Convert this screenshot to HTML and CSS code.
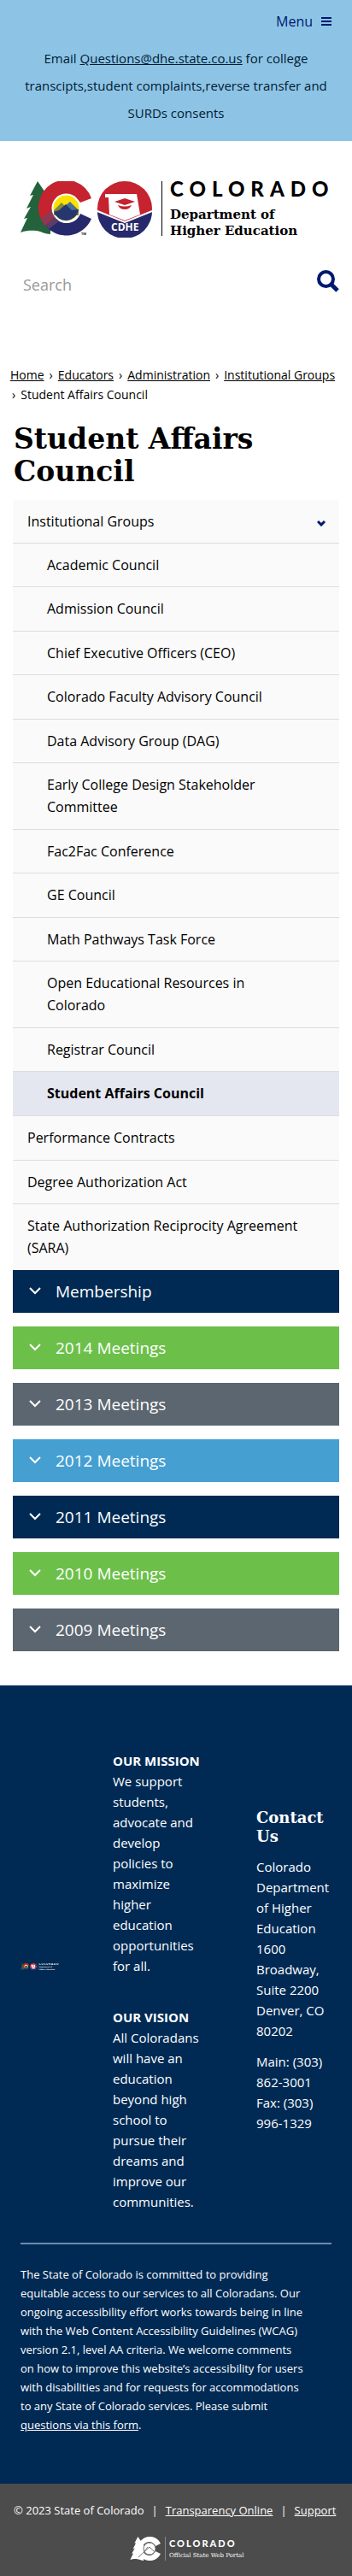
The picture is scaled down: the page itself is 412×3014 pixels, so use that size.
FILE: index.html
```html
<!DOCTYPE html>
<html lang="en">
<head>
<meta charset="utf-8">
<meta name="viewport" content="width=device-width, initial-scale=1">
<title>Student Affairs Council</title>
<link rel="stylesheet" href="styles.css">
</head>
<body>
<svg class="defs" aria-hidden="true">
  <symbol id="tree" viewBox="0 0 36 62">
    <path d="M20 0 11 17l4-1-8 16 5-2-8 14 4-1L0 60c9-3 14-2 19-2 6 1 10 4 16 4V22z"/>
  </symbol>
  <symbol id="agency-logo" viewBox="0 0 364 66">
    <path fill="#23633c" d="M20 0 11 17l4-1-8 16 5-2-8 14 4-1L0 60c9-3 14-2 19-2 6 1 10 4 16 4V22z"/>
    <path fill="#c4232f" d="M83 20A32 32 0 1 0 29 52L41 43A17 17 0 1 1 70 25z"/>
    <path fill="#26296b" d="M83 44A32 32 0 0 1 29 52L41 43A17 17 0 0 0 70 38z"/>
    <path fill="#5a3d69" d="M29 52l12-12 4 7-12 9z"/>
    <path fill="#8a3a58" d="M24 45l13-12 3 7-12 11z"/>
    <circle cx="53.500" cy="31.500" r="17" fill="#fff"/>
    <circle cx="53.500" cy="31.500" r="15" fill="#fde100"/>
    <path fill="#7d8b3c" d="M39 34l9-9 5 5 5-5 10 9v6H39z"/>
    <path fill="#466f97" d="m47 33 11-9 10 10-3 6-9-6z"/>
    <path fill="#26376f" d="m39 36 6-2 8-7 7 7 8-1a15 15 0 0 1-29 3z"/>
    <text x="71" y="63" class="tm" fill="#222">TM</text>
    <circle cx="122" cy="32" r="32" fill="#c4232f"/>
    <path fill="#26296b" d="M90 35l32 13 32-13a32 32 0 0 1-64 0z"/>
    <path fill="none" stroke="#fff" stroke-width="2" d="m90 35 32 13 32-13"/>
    <path fill="#fff" d="M99 15h37l4 24-18 7-18-7-1-20h-4z"/>
    <path fill="#c4232f" d="m110 24 12-4 12 4-12 4zM114 28q8 3 16 0-2 5-8 5t-8-5z"/>
    <text x="106" y="58" class="cdhe" fill="#fff">CDHE</text>
    <path stroke="currentColor" d="M165.500 0v64"/>
    <text x="175" y="18" class="wordmark" fill="currentColor">COLORADO</text>
    <text x="175" y="44" class="agency" fill="currentColor">Department of</text>
    <text x="175" y="63" class="agency" fill="currentColor">Higher Education</text>
  </symbol>
</svg>

<header>
  <div class="topbar">
    <button class="menu" type="button">Menu
      <svg width="12" height="12" viewBox="0 0 12 12" aria-hidden="true"><path d="M0 2h12M0 6h12M0 10h12" stroke="currentColor" stroke-width="2"/></svg>
    </button>
    <p class="notice">Email <a href="mailto:Questions@dhe.state.co.us">Questions@dhe.state.co.us</a> for college transcipts,student complaints,reverse transfer and SURDs consents</p>
  </div>
  <a class="logo" href="#" aria-label="Colorado Department of Higher Education"><svg viewBox="0 0 364 66" aria-hidden="true"><use href="#agency-logo"/></svg></a>
  <form class="search" role="search">
    <input type="search" placeholder="Search" aria-label="Search">
    <button type="submit" aria-label="Submit search">
      <svg width="26" height="26" viewBox="0 0 26 26" aria-hidden="true"><circle cx="10.500" cy="10.500" r="8.500" fill="none" stroke="currentColor" stroke-width="4"/><path d="m17 17 7 7" stroke="currentColor" stroke-width="5"/></svg>
    </button>
  </form>
</header>

<nav class="crumbs" aria-label="Breadcrumb">
  <a href="#">Home</a><span class="sep">›</span><a href="#">Educators</a><span class="sep">›</span><a href="#">Administration</a><span class="sep">›</span><a href="#">Institutional Groups</a> <span class="sep">›</span>Student Affairs Council
</nav>

<main>
  <h1>Student Affairs Council</h1>
  <nav class="side" aria-label="Section">
    <ul>
      <li>
        <div class="row"><a href="#">Institutional Groups</a>
          <button type="button" aria-label="Toggle Institutional Groups"><svg width="10" height="8" viewBox="0 0 10 8" aria-hidden="true"><path d="m1 2 4 4 4-4" fill="none" stroke="currentColor" stroke-width="3"/></svg></button></div>
        <ul class="sub">
          <li><a href="#">Academic Council</a></li>
          <li><a href="#">Admission Council</a></li>
          <li><a href="#">Chief Executive Officers (CEO)</a></li>
          <li><a href="#">Colorado Faculty Advisory Council</a></li>
          <li><a href="#">Data Advisory Group (DAG)</a></li>
          <li><a href="#">Early College Design Stakeholder Committee</a></li>
          <li><a href="#">Fac2Fac Conference</a></li>
          <li><a href="#">GE Council</a></li>
          <li><a href="#">Math Pathways Task Force</a></li>
          <li><a href="#">Open Educational Resources in Colorado</a></li>
          <li><a href="#">Registrar Council</a></li>
          <li><a class="current" href="#" aria-current="page">Student Affairs Council</a></li>
        </ul>
      </li>
      <li><a href="#">Performance Contracts</a></li>
      <li><a href="#">Degree Authorization Act</a></li>
      <li><a href="#">State Authorization Reciprocity Agreement (SARA)</a></li>
    </ul>
  </nav>
  <div class="accordion">
    <button type="button" class="navy"><svg viewBox="0 0 16 12" aria-hidden="true"><path d="m2 2 6 6 6-6"/></svg>Membership</button>
    <button type="button" class="green"><svg viewBox="0 0 16 12" aria-hidden="true"><path d="m2 2 6 6 6-6"/></svg>2014 Meetings</button>
    <button type="button" class="gray"><svg viewBox="0 0 16 12" aria-hidden="true"><path d="m2 2 6 6 6-6"/></svg>2013 Meetings</button>
    <button type="button" class="blue"><svg viewBox="0 0 16 12" aria-hidden="true"><path d="m2 2 6 6 6-6"/></svg>2012 Meetings</button>
    <button type="button" class="navy"><svg viewBox="0 0 16 12" aria-hidden="true"><path d="m2 2 6 6 6-6"/></svg>2011 Meetings</button>
    <button type="button" class="green"><svg viewBox="0 0 16 12" aria-hidden="true"><path d="m2 2 6 6 6-6"/></svg>2010 Meetings</button>
    <button type="button" class="gray"><svg viewBox="0 0 16 12" aria-hidden="true"><path d="m2 2 6 6 6-6"/></svg>2009 Meetings</button>
  </div>
</main>

<footer>
  <div class="info">
    <div class="columns">
      <svg class="mini" viewBox="0 0 364 66" role="img" aria-label="Colorado Department of Higher Education"><use href="#agency-logo"/></svg>
      <div class="statements">
        <p><strong>OUR MISSION</strong><br>We support students, advocate and develop policies to maximize higher education opportunities for all.</p>
        <p><strong>OUR VISION</strong><br>All Coloradans will have an education beyond high school to pursue their dreams and improve our communities.</p>
      </div>
      <div class="contact">
        <h2>Contact Us</h2>
        <p>Colorado Department of Higher Education<br>1600 Broadway, Suite 2200<br>Denver, CO 80202</p>
        <p>Main: (303) 862-3001<br>Fax: (303) 996-1329</p>
      </div>
    </div>
    <p class="access">The State of Colorado is committed to providing<br>
      equitable access to our services to all Coloradans. Our<br>
      ongoing accessibility effort works towards being in line<br>
      with the Web Content Accessibility Guidelines (WCAG)<br>
      version 2.1, level AA criteria. We welcome comments<br>
      on how to improve this website’s accessibility for users<br>
      with disabilities and for requests for accommodations<br>
      to any State of Colorado services. Please submit<br>
      <a href="#">questions via this form</a>.</p>
  </div>
  <div class="legal">
    <p><span>© 2023 State of Colorado</span><span>|</span><a href="#">Transparency Online</a><span>|</span><a href="#">Support</a></p>
    <a class="portal" href="#" aria-label="Colorado Official State Web Portal">
      <svg width="136" height="29" viewBox="0 0 136 29" aria-hidden="true">
        <use href="#tree" x="0" y="0" width="17" height="28" fill="#fff"/>
        <path fill="#fff" d="M36 8A14 14 0 1 0 36 20L30 17A8 8 0 1 1 30 11z"/>
        <circle cx="23" cy="14" r="7" fill="#fff" stroke="#777"/>
        <path fill="none" stroke="#777" d="m10 24 13-12 6 6M17 17l4-5"/>
        <path stroke="#888" d="M41.500 0v28"/>
        <text x="46" y="12" class="portal-name" fill="#fff">COLORADO</text>
        <text x="46" y="24" class="portal-sub" fill="#fff">Official State Web Portal</text>
      </svg>
    </a>
  </div>
</footer>
</body>
</html>
```
FILE: styles.css
```css
* { box-sizing: border-box; }
body {
  margin: 0;
  background: #fff;
  color: #000;
  font: 16px/26px "Open Sans", sans-serif;
}
a { color: inherit; }
p, h1, h2, ul { margin: 0; padding: 0; }
ul { list-style: none; }
button { border: 0; background: none; padding: 0; font: inherit; color: inherit; }
.defs { display: none; }

.topbar { background: #8dc4e5; padding: 12px 16px 17px; color: #001a33; }
.menu { display: flex; align-items: center; gap: 10px; margin: 0 8px 14px auto; color: #001970; }
.notice { text-align: center; line-height: 32px; font-size: 15px; }

.logo { display: block; padding: 0 24px; margin-top: 47px; color: #000; }
.logo svg { display: block; width: 100%; }
.wordmark { font: 900 24px Lato, sans-serif; letter-spacing: 7px; }
.agency { font: bold 15px "DejaVu Serif", serif; }
.cdhe { font: bold 12px "Open Sans", sans-serif; }
.tm { font: bold 4px "Open Sans", sans-serif; }

.search { display: flex; align-items: center; padding: 0 15px 0 24px; margin-top: 30px; }
.search input { flex: 1; min-width: 0; height: 50px; border: 0; padding: 0 3px; font-family: inherit; font-size: 18px; background: none; }
.search input::placeholder { color: #999; }
.search button { color: #001970; margin-bottom: 8px; }
.search svg { display: block; }

.crumbs { padding: 0 8px 0 12px; margin-top: 69px; font-size: 14px; line-height: 23px; }
.sep { margin: 0 6px; }
.crumbs .sep:last-child { margin-left: 2px; }

main { padding: 22px 15px 40px; }
h1 { font: bold 33px/38px "DejaVu Serif", serif; padding: 0 1px; margin-bottom: 14px; }

.side li { background: #fafafa; }
.side a { display: block; padding: 12px 16px 12px 17px; border-bottom: 1px solid #ddd; text-decoration: none; }
.side li:nth-child(even) > a { padding-bottom: 13px; }
.side > ul > li:last-child > a { border: 0; }
.side .sub a { padding-left: 40px; padding-right: 40px; }
.side .sub .current { background: #e5e7f0; font-weight: bold; }
.row { display: flex; border-bottom: 1px solid #ddd; }
.row a { flex: 1; border: 0; }
.row button { padding: 0 16px; color: #001970; }

.accordion { display: flex; flex-direction: column; gap: 16px; }
.accordion button { display: flex; align-items: center; gap: 16px; height: 50px; padding: 0 18px; color: #fff; font-size: 19px; text-align: left; }
.accordion svg { width: 16px; height: 12px; fill: none; stroke: #fff; stroke-width: 2; }
.navy { background: #002a54; }
.green { background: #6cc04a; }
.gray { background: #5c6670; }
.blue { background: #459fd1; }

.info { background: #002a54; color: #fff; padding: 76px 24px 58px; font-size: 15px; line-height: 24px; }
.columns { display: grid; grid-template-columns: 45fr 105fr 88fr; column-gap: 63px; align-items: center; padding-bottom: 36px; border-bottom: 2px solid #6f8cab; }
.columns > * { min-width: 0; }
.mini { width: 100%; margin-bottom: 34px; }
.statements { display: grid; gap: 36px; }
.contact { margin-bottom: 24px; }
.contact h2 { font: bold 18px/22px "DejaVu Serif", serif; margin-bottom: 12px; }
.contact p + p { margin-top: 12px; }
.access { padding-top: 24px; font-size: 13px; line-height: 22px; }

.legal { background: #4c4c4c; color: #fff; padding: 20px 16px 17px; font-size: 13px; line-height: 22px; }
.legal p { display: flex; gap: 9px; flex-wrap: wrap; }
.portal { display: flex; justify-content: center; margin: 20px 0 0 28px; }
.portal-name { font: 900 11px Lato, sans-serif; letter-spacing: 2px; }
.portal-sub { font: 7px "DejaVu Serif", serif; }
```
